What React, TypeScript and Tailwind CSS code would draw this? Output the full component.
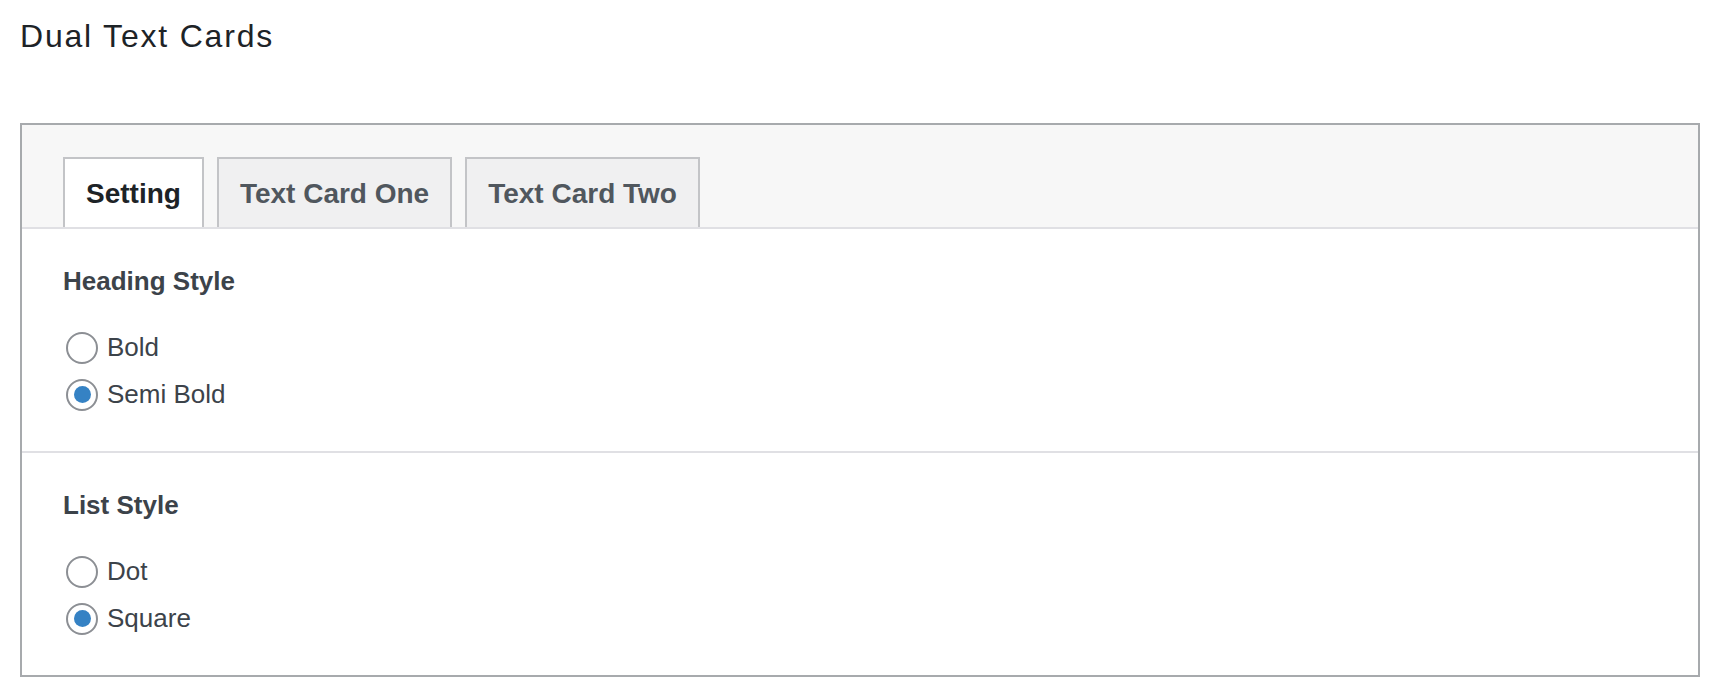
import { useState } from "react";

const tabs = ["Setting", "Text Card One", "Text Card Two"];

const sections = [
  { title: "Heading Style", options: ["Bold", "Semi Bold"], value: "Semi Bold" },
  { title: "List Style", options: ["Dot", "Square"], value: "Square" },
];

function Radio({ checked }: { checked: boolean }) {
  return (
    <span className="ml-[3px] flex h-[32px] w-[32px] shrink-0 items-center justify-center rounded-full border-2 border-[#8c8f94] bg-white">
      {checked && <span className="h-[17px] w-[17px] rounded-full bg-[#3582c4]" />}
    </span>
  );
}

function OptionGroup({ title, options, initial }: { title: string; options: string[]; initial: string }) {
  const [value, setValue] = useState(initial);
  return (
    <div className="px-[41px] pt-[34px] pb-[33px]">
      <h3 className="h-[36px] text-[26px] leading-[36px] font-bold text-[#3c434a]">{title}</h3>
      <div className="mt-[25px] flex flex-col">
        {options.map((o) => (
          <label key={o} onClick={() => setValue(o)} className="flex h-[47px] cursor-pointer items-center gap-[9px]">
            <Radio checked={value === o} />
            <span className="text-[26px] text-[#3c434a]">{o}</span>
          </label>
        ))}
      </div>
    </div>
  );
}

export default function App() {
  const [active, setActive] = useState(0);
  return (
    <div className="min-h-screen bg-white font-['Liberation_Sans',Arial,sans-serif]">
      <h1 className="h-[54px] pt-[18px] pl-[20px] text-[32px] leading-[36px] tracking-[1.8px] font-normal text-[#1d2327]">
        Dual Text Cards
      </h1>

      <div className="mt-[69px] ml-[20px] w-[1680px] border-2 border-[#a7aaad]">
        <div className="flex gap-[13px] border-b-2 border-[#e0e0e4] bg-[#f7f7f7] pt-[32px] pl-[41px]">
          {tabs.map((t, i) => (
            <button
              key={t}
              onClick={() => setActive(i)}
              className={
                "h-[70px] border-2 border-b-0 border-[#c3c4c7] px-[21px] pt-px text-[28px] leading-[67px] font-bold " +
                (i === active ? "bg-white text-[#1d2327]" : "bg-[#f0f0f1] text-[#50575e]")
              }
            >
              {t}
            </button>
          ))}
        </div>

        <div className="divide-y-2 divide-[#e0e0e4]">
          {sections.map((s) => (
            <OptionGroup key={s.title} title={s.title} options={s.options} initial={s.value} />
          ))}
        </div>
      </div>
    </div>
  );
}
